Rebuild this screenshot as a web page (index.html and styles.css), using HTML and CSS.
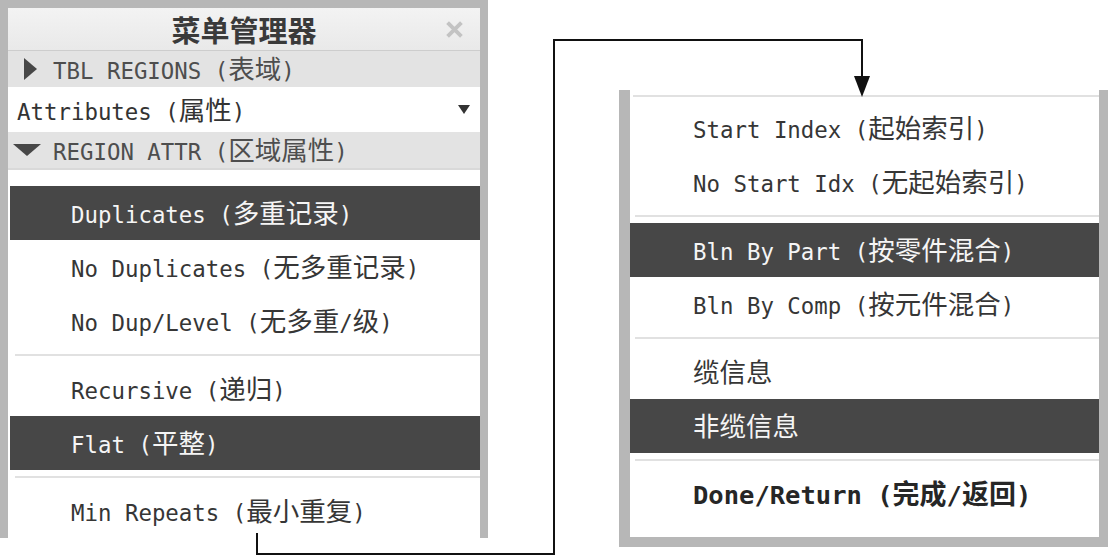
FILE: index.html
```html
<!DOCTYPE html>
<html lang="zh-CN">
<head>
<meta charset="utf-8">
<title>菜单管理器</title>
<link rel="stylesheet" href="styles.css">
</head>
<body>
<div class="canvas">
  <section class="panel panel-left">
    <header class="title-bar">
      <h1 class="title">菜单管理器</h1>
      <svg class="close" viewBox="0 0 16 16" aria-label="close">
        <path d="M1.5 1.5 L14.5 14.5 M14.5 1.5 L1.5 14.5" />
      </svg>
    </header>
    <div class="group-row collapsed">
      <span class="tri-right"></span>
      <span class="lbl">TBL REGIONS (<span class="cn">表域</span>)</span>
    </div>
    <div class="select-row">
      <span class="lbl">Attributes (<span class="cn">属性</span>)</span>
      <span class="dd"></span>
    </div>
    <div class="group-row expanded">
      <span class="tri-down"></span>
      <span class="lbl">REGION ATTR (<span class="cn">区域属性</span>)</span>
    </div>
    <ul class="menu menu-left">
      <li class="item active"><span class="lbl">Duplicates (<span class="cn">多重记录</span>)</span></li>
      <li class="item"><span class="lbl">No Duplicates (<span class="cn">无多重记录</span>)</span></li>
      <li class="item"><span class="lbl">No Dup/Level (<span class="cn">无多重</span>/<span class="cn">级</span>)</span></li>
      <li class="sep"></li>
      <li class="item"><span class="lbl">Recursive (<span class="cn">递归</span>)</span></li>
      <li class="item active"><span class="lbl">Flat (<span class="cn">平整</span>)</span></li>
      <li class="sep"></li>
      <li class="item"><span class="lbl">Min Repeats (<span class="cn">最小重复</span>)</span></li>
    </ul>
  </section>

  <section class="panel panel-right">
    <ul class="menu menu-right">
      <li class="sep top"></li>
      <li class="item"><span class="lbl">Start Index (<span class="cn">起始索引</span>)</span></li>
      <li class="item"><span class="lbl">No Start Idx (<span class="cn">无起始索引</span>)</span></li>
      <li class="sep"></li>
      <li class="item active"><span class="lbl">Bln By Part (<span class="cn">按零件混合</span>)</span></li>
      <li class="item"><span class="lbl">Bln By Comp (<span class="cn">按元件混合</span>)</span></li>
      <li class="sep"></li>
      <li class="item"><span class="lbl"><span class="cn">缆信息</span></span></li>
      <li class="item active"><span class="lbl"><span class="cn">非缆信息</span></span></li>
      <li class="sep"></li>
      <li class="item bold"><span class="lbl">Done/Return (<span class="cn">完成</span>/<span class="cn">返回</span>)</span></li>
    </ul>
  </section>

  <svg class="connector" viewBox="0 0 1108 557" width="1108" height="557" aria-hidden="true">
    <path d="M257 533 V554 H554 V40 H862 V80" />
    <polygon points="854,76 870,76 862,97" />
  </svg>
</div>
</body>
</html>
```

FILE: styles.css
```css
* {
  box-sizing: border-box;
  margin: 0;
  padding: 0;
}

body {
  background: #ffffff;
  font-family: "DejaVu Sans Mono", "Noto Sans CJK SC", monospace;
  font-size: 22.4px;
  color: #333333;
}

.canvas {
  position: relative;
  width: 1108px;
  height: 557px;
  display: flex;
  align-items: flex-start;
  gap: 131px;
  overflow: hidden;
}

.panel {
  background: #ffffff;
  border-style: solid;
  border-color: #b7b7b7;
}

.panel-left {
  width: 488px;
  height: 538px;
  border-width: 8px 8px 0 8px;
  display: flex;
  flex-direction: column;
}

.title-bar {
  height: 43px;
  flex: none;
  display: grid;
  grid-template-columns: 1fr auto 1fr;
  align-items: center;
  background: linear-gradient(#f3f3f3, #e9e9e9);
  border-bottom: 1px solid #cdcdcd;
}

.title {
  grid-column: 2;
  font: 700 29px/1 "Noto Sans CJK SC", sans-serif;
  color: #3a3a3a;
}

.close {
  grid-column: 3;
  justify-self: end;
  margin-right: 17px;
  width: 17px;
  height: 17px;
}

.close path {
  stroke: #c3c3c3;
  stroke-width: 3.6;
  fill: none;
}

.lbl {
  line-height: 1;
  white-space: nowrap;
}

.cn {
  font-family: "Noto Sans CJK SC", sans-serif;
  font-size: 26.5px;
}

.group-row {
  height: 36px;
  flex: none;
  display: flex;
  align-items: center;
  background: #e3e3e3;
  color: #4e4e4e;
}

.group-row.collapsed {
  padding-left: 16px;
}

.group-row.collapsed .lbl {
  margin-left: 16px;
}

.group-row.expanded {
  padding-left: 5px;
}

.group-row.expanded .lbl {
  margin-left: 12px;
}

.tri-right {
  width: 0;
  height: 0;
  border-left: 13px solid #474747;
  border-top: 11px solid transparent;
  border-bottom: 11px solid transparent;
}

.tri-down {
  width: 0;
  height: 0;
  border-top: 12px solid #474747;
  border-left: 14px solid transparent;
  border-right: 14px solid transparent;
}

.select-row {
  height: 45px;
  flex: none;
  display: flex;
  align-items: center;
  justify-content: space-between;
  padding: 0 10px 0 9px;
  background: #ffffff;
  color: #333333;
}

.dd {
  width: 0;
  height: 0;
  border-top: 9px solid #333333;
  border-left: 6.5px solid transparent;
  border-right: 6.5px solid transparent;
}

.menu {
  list-style: none;
}

.menu-left {
  flex: 1;
  padding: 16px 0 0 2px;
  border-top: 2px solid #d9d9d9;
}

.item {
  height: 54px;
  display: flex;
  align-items: center;
  padding-left: 63px;
  color: #363636;
}

.menu-left .item {
  padding-left: 61px;
}

.item.active {
  background: #474747;
  color: #f5f5f5;
}

.item.bold {
  font-weight: 700;
  font-size: 25.5px;
  color: #262626;
}

.item.bold .cn {
  font-size: 27px;
}

.sep {
  height: 2px;
  margin: 6px 0 6px 5px;
  background: #e1e1e1;
}

.sep.top {
  margin: 5px 0 4px 3px;
}

.panel-right {
  width: 489px;
  margin-top: 90px;
  border-width: 0 9px 10px 11px;
  padding-bottom: 16px;
}

.connector {
  position: absolute;
  left: 0;
  top: 0;
  pointer-events: none;
}

.connector path {
  fill: none;
  stroke: #111111;
  stroke-width: 2;
}

.connector polygon {
  fill: #111111;
}
```
